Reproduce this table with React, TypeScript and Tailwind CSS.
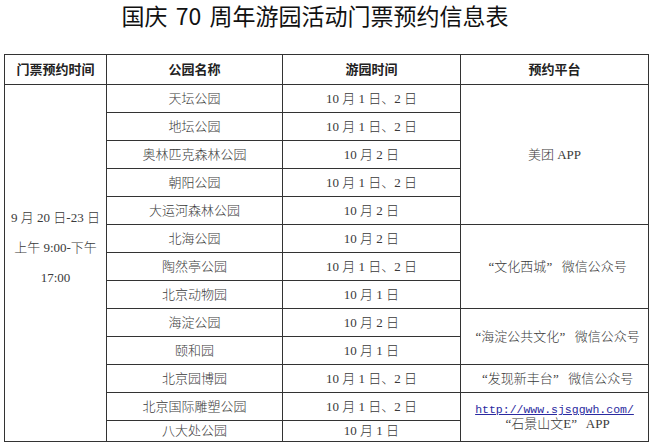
const body = '"Liberation Serif", "Noto Sans CJK SC", serif';

type Row = { park: string; date: string };

const rows: Row[] = [
  { park: '天坛公园', date: '10 月 1 日、2 日' },
  { park: '地坛公园', date: '10 月 1 日、2 日' },
  { park: '奥林匹克森林公园', date: '10 月 2 日' },
  { park: '朝阳公园', date: '10 月 1 日、2 日' },
  { park: '大运河森林公园', date: '10 月 2 日' },
  { park: '北海公园', date: '10 月 2 日' },
  { park: '陶然亭公园', date: '10 月 1 日、2 日' },
  { park: '北京动物园', date: '10 月 1 日' },
  { park: '海淀公园', date: '10 月 2 日' },
  { park: '颐和园', date: '10 月 1 日' },
  { park: '北京园博园', date: '10 月 1 日、2 日' },
  { park: '北京国际雕塑公园', date: '10 月 1 日、2 日' },
  { park: '八大处公园', date: '10 月 1 日' },
];

// full-width quote boxes, glyph pushed toward the quoted text
function Open() {
  return <span className="inline-block w-[12px] text-right">“</span>;
}
function Close() {
  return <span className="inline-block w-[12px] text-left">”</span>;
}

function platformCell(i: number) {
  const cls = 'border border-[#333] text-center align-middle';
  if (i === 0)
    return (
      <td rowSpan={5} className={cls}>
        美团 APP
      </td>
    );
  if (i === 5)
    return (
      <td rowSpan={3} className={cls}>
        <Open />文化西城<Close /> 微信公众号
      </td>
    );
  if (i === 8)
    return (
      <td rowSpan={2} className={cls}>
        <Open />海淀公共文化<Close /> 微信公众号
      </td>
    );
  if (i === 10)
    return (
      <td className={cls}>
        <Open />发现新丰台<Close /> 微信公众号
      </td>
    );
  if (i === 11)
    return (
      <td rowSpan={2} className={`${cls} leading-[14px]`}>
        <div
          className="text-[11.5px] text-[#2a2aa0] underline"
          style={{ fontFamily: '"Liberation Mono", monospace' }}
        >
          http://www.sjsggwh.com/
        </div>
        <div>
          <Open />石景山文E<Close /> APP
        </div>
      </td>
    );
  return null;
}

export default function App() {
  return (
    <div className="w-[650px] h-[445px] bg-white overflow-hidden">
      <h1
        className="text-center text-[23px] leading-[30px] pr-[20px] text-[#111] [word-spacing:3px]"
        style={{ fontFamily: '"Noto Sans CJK SC", sans-serif' }}
      >
        国庆 70 周年游园活动门票预约信息表
      </h1>

      <table
        className="mt-[24px] ml-[4px] w-[644px] table-fixed border-collapse text-[13px] font-light text-[#3a3a3a]"
        style={{ fontFamily: body }}
      >
        <colgroup>
          <col className="w-[102px]" />
          <col className="w-[176px]" />
          <col className="w-[178px]" />
          <col className="w-[188px]" />
        </colgroup>
        <thead>
          <tr className="h-[30px] font-bold text-[#222]">
            <th className="border border-[#333]">门票预约时间</th>
            <th className="border border-[#333]">公园名称</th>
            <th className="border border-[#333]">游园时间</th>
            <th className="border border-[#333]">预约平台</th>
          </tr>
        </thead>
        <tbody>
          {rows.map((r, i) => (
            <tr key={r.park} className={i === 12 ? 'h-[21px]' : 'h-[28px]'}>
              {i === 0 && (
                <td rowSpan={13} className="border border-[#333] text-center align-middle leading-[30px]">
                  <div>9 月 20 日-23 日</div>
                  <div>上午 9:00-下午</div>
                  <div>17:00</div>
                  <div>&nbsp;</div>
                </td>
              )}
              <td className="border border-[#333] text-center">{r.park}</td>
              <td className="border border-[#333] text-center">{r.date}</td>
              {platformCell(i)}
            </tr>
          ))}
        </tbody>
      </table>
    </div>
  );
}
